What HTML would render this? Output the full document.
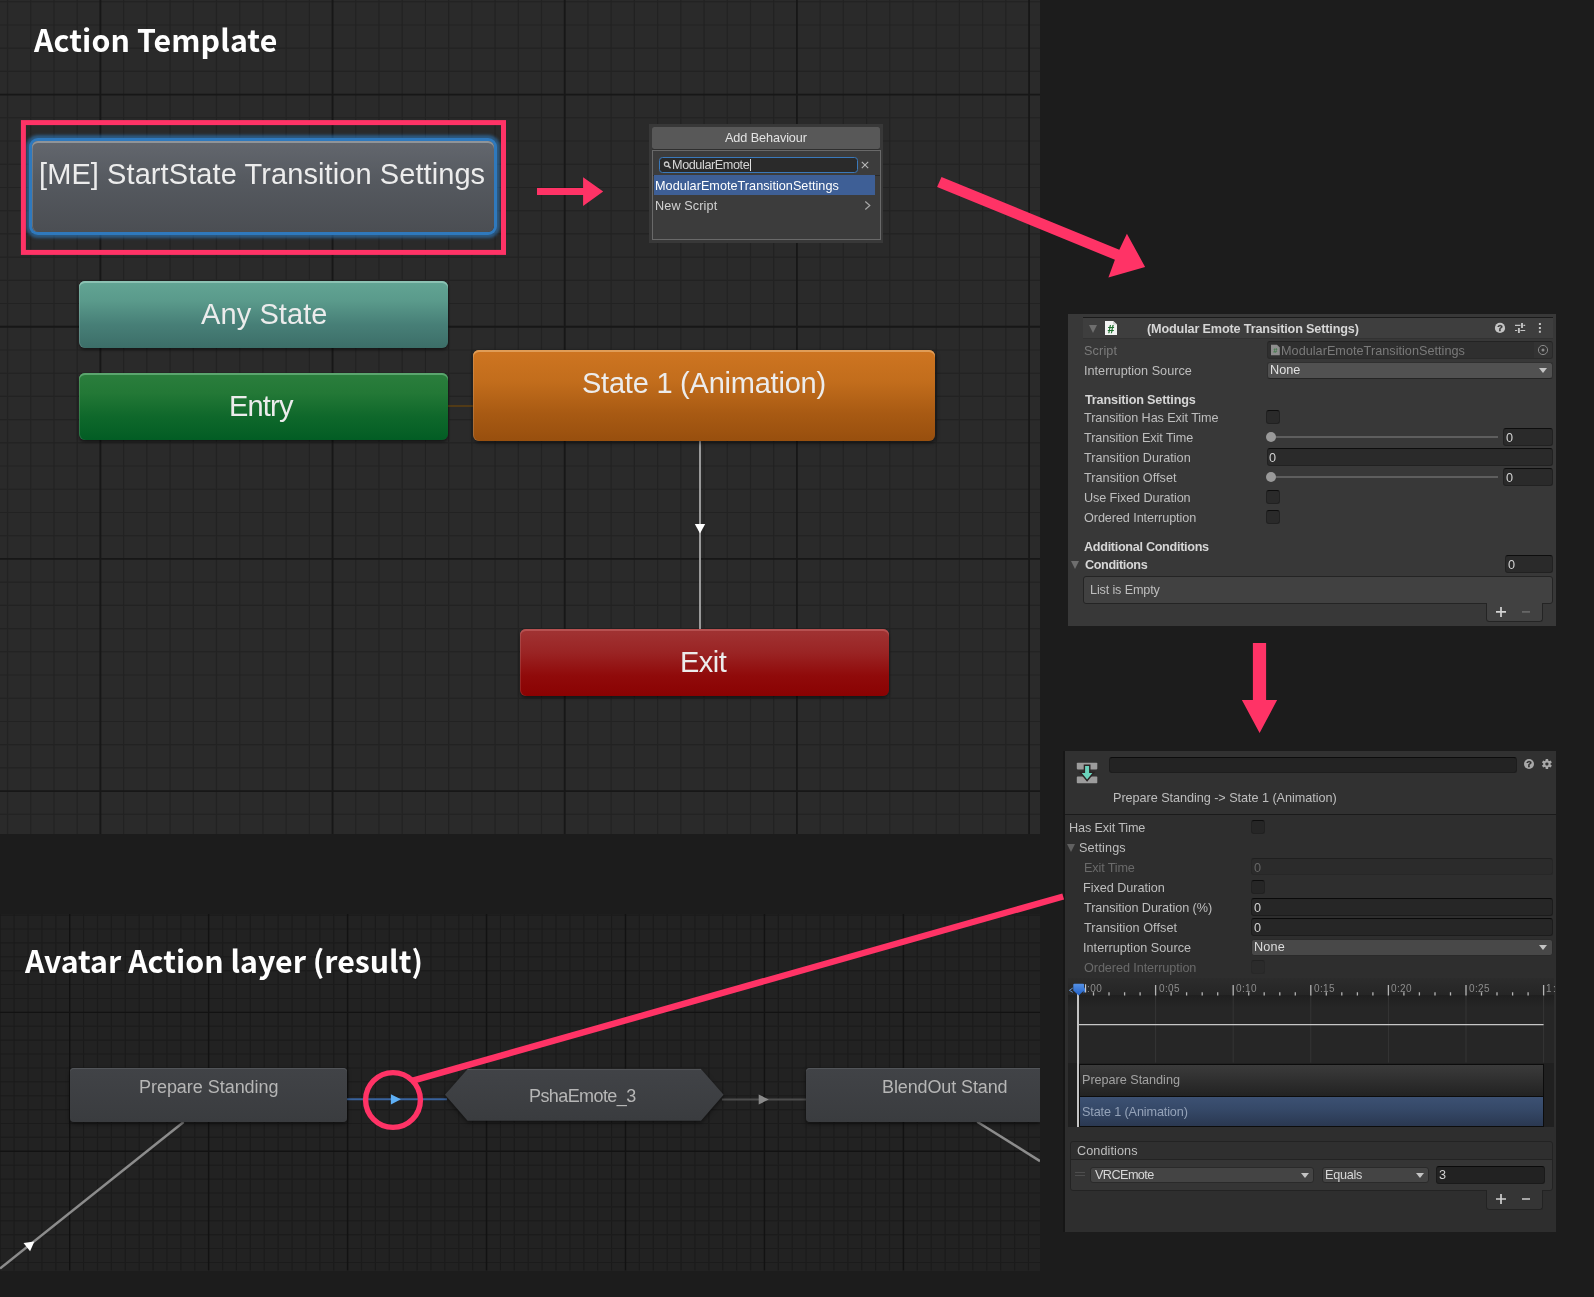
<!DOCTYPE html>
<html lang="en"><head><meta charset="utf-8"><title>Action Template</title>
<style>
html,body{margin:0;padding:0}
body{width:1594px;height:1297px;background:#1c1c1c;position:relative;overflow:hidden;font-family:"Liberation Sans",sans-serif}
.a{position:absolute}
.t{position:absolute;white-space:nowrap;line-height:1;will-change:transform}
.node{position:absolute;border-radius:6px;box-sizing:border-box}
.fld{position:absolute;box-sizing:border-box;border-radius:3px;background:#2a2a2a;border:1px solid #212121;border-top-color:#0d0d0d}
.dd{position:absolute;box-sizing:border-box;border-radius:3px;background:#515151;border:1px solid #303030;border-bottom-color:#242424}
.cb{position:absolute;box-sizing:border-box;border-radius:3px;background:#2a2a2a;border:1px solid #212121;border-top-color:#0d0d0d;width:14px;height:14px}
.g{will-change:transform}
.tri{position:absolute;width:0;height:0;border-left:4px solid transparent;border-right:4px solid transparent;border-top:5px solid #c4c4c4}
</style></head>
<body>
<div class="a" style="left:0;top:0;width:1040.4px;height:834px;background:#2a2a2a;overflow:hidden">
<svg class="a" style="left:0;top:0" width="1040.4" height="834" viewBox="0 0 1040.4 834"><path d="M7.53 0V834M30.75 0V834M53.96 0V834M77.18 0V834M123.61 0V834M146.83 0V834M170.05 0V834M193.27 0V834M216.48 0V834M239.70 0V834M262.92 0V834M286.13 0V834M309.35 0V834M355.78 0V834M379.00 0V834M402.22 0V834M425.44 0V834M448.65 0V834M471.87 0V834M495.09 0V834M518.30 0V834M541.52 0V834M587.95 0V834M611.17 0V834M634.39 0V834M657.61 0V834M680.82 0V834M704.04 0V834M727.26 0V834M750.47 0V834M773.69 0V834M820.12 0V834M843.34 0V834M866.56 0V834M889.78 0V834M912.99 0V834M936.21 0V834M959.43 0V834M982.64 0V834M1005.86 0V834M0 1.73H1040.4M0 24.95H1040.4M0 48.16H1040.4M0 71.38H1040.4M0 117.81H1040.4M0 141.03H1040.4M0 164.25H1040.4M0 187.47H1040.4M0 210.68H1040.4M0 233.90H1040.4M0 257.12H1040.4M0 280.33H1040.4M0 303.55H1040.4M0 349.98H1040.4M0 373.20H1040.4M0 396.42H1040.4M0 419.64H1040.4M0 442.85H1040.4M0 466.07H1040.4M0 489.29H1040.4M0 512.50H1040.4M0 535.72H1040.4M0 582.15H1040.4M0 605.37H1040.4M0 628.59H1040.4M0 651.81H1040.4M0 675.02H1040.4M0 698.24H1040.4M0 721.46H1040.4M0 744.67H1040.4M0 767.89H1040.4M0 814.32H1040.4" stroke="#222222" stroke-width="1.1" fill="none"/><path d="M100.40 0V834M332.57 0V834M564.74 0V834M796.91 0V834M1029.08 0V834M0 94.60H1040.4M0 326.77H1040.4M0 558.94H1040.4M0 791.11H1040.4" stroke="#171717" stroke-width="1.8" fill="none"/></svg>
</div>
<div class="a" style="left:0;top:914.2px;width:1040px;height:356.6px;background:#222222;overflow:hidden">
<svg class="a" style="left:0;top:0" width="1040" height="356.6" viewBox="0 0 1040 356.6"><path d="M0.23 0V356.6M14.12 0V356.6M28.02 0V356.6M41.91 0V356.6M55.80 0V356.6M83.59 0V356.6M97.49 0V356.6M111.38 0V356.6M125.28 0V356.6M139.17 0V356.6M153.07 0V356.6M166.97 0V356.6M180.86 0V356.6M194.76 0V356.6M222.55 0V356.6M236.44 0V356.6M250.34 0V356.6M264.23 0V356.6M278.13 0V356.6M292.02 0V356.6M305.92 0V356.6M319.81 0V356.6M333.70 0V356.6M361.49 0V356.6M375.39 0V356.6M389.28 0V356.6M403.18 0V356.6M417.07 0V356.6M430.97 0V356.6M444.86 0V356.6M458.76 0V356.6M472.65 0V356.6M500.44 0V356.6M514.34 0V356.6M528.23 0V356.6M542.13 0V356.6M556.02 0V356.6M569.92 0V356.6M583.81 0V356.6M597.71 0V356.6M611.60 0V356.6M639.39 0V356.6M653.29 0V356.6M667.18 0V356.6M681.08 0V356.6M694.97 0V356.6M708.87 0V356.6M722.76 0V356.6M736.66 0V356.6M750.55 0V356.6M778.34 0V356.6M792.24 0V356.6M806.13 0V356.6M820.03 0V356.6M833.92 0V356.6M847.82 0V356.6M861.71 0V356.6M875.61 0V356.6M889.50 0V356.6M917.29 0V356.6M931.19 0V356.6M945.08 0V356.6M958.98 0V356.6M972.87 0V356.6M986.77 0V356.6M1000.66 0V356.6M1014.56 0V356.6M1028.45 0V356.6M0 1.08H1040M0 14.98H1040M0 28.88H1040M0 42.77H1040M0 56.66H1040M0 70.56H1040M0 84.45H1040M0 112.24H1040M0 126.14H1040M0 140.03H1040M0 153.93H1040M0 167.82H1040M0 181.72H1040M0 195.62H1040M0 209.51H1040M0 223.41H1040M0 251.20H1040M0 265.09H1040M0 278.99H1040M0 292.88H1040M0 306.77H1040M0 320.67H1040M0 334.56H1040M0 348.46H1040" stroke="#1b1b1b" stroke-width="1.1" fill="none"/><path d="M69.70 0V356.6M208.65 0V356.6M347.60 0V356.6M486.55 0V356.6M625.50 0V356.6M764.45 0V356.6M903.40 0V356.6M0 98.35H1040M0 237.30H1040" stroke="#121212" stroke-width="1.4" fill="none"/></svg>
</div>
<svg class="a" style="left:0;top:0" width="1594" height="1297" viewBox="0 0 1594 1297">
<path d="M448 406H473" stroke="#5c3f12" stroke-width="1.6"/>
<path d="M700 441V629" stroke="#a0a0a0" stroke-width="1.9"/>
<path d="M694.8 524H705.2L700 533.6Z" fill="#ffffff"/>
<path d="M183.6 1122L0 1268.6" stroke="#8c8c8c" stroke-width="2.5"/>
<path d="M23.5 1243.1L34.3 1241.4L30.1 1251.3Z" fill="#ffffff"/>
<path d="M346.8 1099.3H447" stroke="#38629c" stroke-width="2"/>
<path d="M390.9 1094.2L400.9 1099.3L390.9 1104.4Z" fill="#5eb0f6"/>
<path d="M722 1099.5H806" stroke="#4c4c4c" stroke-width="2"/>
<path d="M758.7 1094.5L768.8 1099.5L758.7 1104.5Z" fill="#8a8a8a"/>
<path d="M977.2 1121.8L1040 1161.1" stroke="#8c8c8c" stroke-width="2.5"/>
</svg>
<div class="node" style="left:32px;top:141px;width:461.6px;height:90.5px;background:linear-gradient(#63676e,#55595f 45%,#4b4e53);box-shadow:0 0 0 3px #2f79bd,0 0 3px 6px rgba(47,121,189,.6),inset 0 2px 0 #8f9499,inset 1px 0 0 rgba(255,255,255,.16)"></div>
<span class="t" style="left:38.89px;top:158px;font-size:29px;line-height:32px;color:#ececec;letter-spacing:0.084px">[ME] StartState Transition Settings</span>
<div class="node" style="left:79px;top:281px;width:369px;height:67px;background:linear-gradient(#62a594,#5a9a8b 30%,#477f77 65%,#3c6e68);box-shadow:0 2px 3px rgba(0,0,0,.45),inset 0 2px 0 #8cc2b3,inset 1px 0 0 rgba(255,255,255,.14)"></div>
<span class="t" style="left:201.00px;top:298px;font-size:29px;line-height:32px;color:#ececec;letter-spacing:0.092px">Any State</span>
<div class="node" style="left:79px;top:373px;width:369px;height:67px;background:linear-gradient(#2b7e3d,#237836 30%,#0f682b 65%,#025d24);box-shadow:0 2px 3px rgba(0,0,0,.45),inset 0 2px 0 #5ba56e,inset 1px 0 0 rgba(255,255,255,.14)"></div>
<span class="t" style="left:229.33px;top:390px;font-size:29px;line-height:32px;color:#ececec;letter-spacing:-0.805px">Entry</span>
<div class="node" style="left:473px;top:350px;width:462px;height:91px;background:linear-gradient(#ce7521,#c26d1c 35%,#a85a13 70%,#984f0e);box-shadow:1px 2px 4px rgba(0,0,0,.5),inset 0 2px 0 #e09d57,inset 1px 0 0 rgba(255,255,255,.14)"></div>
<span class="t" style="left:582.09px;top:367px;font-size:29px;line-height:32px;color:#ececec;letter-spacing:-0.229px">State 1 (Animation)</span>
<div class="node" style="left:520.3px;top:629px;width:368.7px;height:67px;background:linear-gradient(#a13434,#9a2424 35%,#900a0a 70%,#8a0202);box-shadow:0 2px 3px rgba(0,0,0,.45),inset 0 2px 0 #b65050,inset 1px 0 0 rgba(255,255,255,.12)"></div>
<span class="t" style="left:680.03px;top:646px;font-size:29px;line-height:32px;color:#ececec;letter-spacing:-0.492px">Exit</span>
<span class="t" style="left:33.57px;top:17px;font-size:30.3px;line-height:44px;color:#ffffff;letter-spacing:0.113px;font-weight:700;font-family:'Noto Sans CJK JP','Liberation Sans',sans-serif">Action Template</span>
<span class="t" style="left:24.57px;top:938px;font-size:30.3px;line-height:44px;color:#ffffff;letter-spacing:0.011px;font-weight:700;font-family:'Noto Sans CJK JP','Liberation Sans',sans-serif">Avatar Action layer (result)</span>
<div class="node" style="left:70.1px;top:1068.2px;width:276.7px;height:53.7px;border-radius:4px;background:linear-gradient(#414347,#3a3c3f);box-shadow:0 2px 4px rgba(0,0,0,.5),inset 0 1px 0 #53565a"></div>
<span class="t" style="left:139.30px;top:1077px;font-size:18px;line-height:20px;color:#b6b6b6;letter-spacing:-0.039px">Prepare Standing</span>
<svg class="a" style="left:440px;top:1062px;filter:drop-shadow(0 2px 2px rgba(0,0,0,.5))" width="290" height="66" viewBox="440 1062 290 66"><defs><linearGradient id="hx" x1="0" y1="0" x2="0" y2="1"><stop offset="0" stop-color="#414347"/><stop offset="1" stop-color="#3a3c3f"/></linearGradient></defs><path d="M445 1094.8L467.6 1068.9H701L723.6 1094.8L701 1120.8H467.6Z" fill="url(#hx)"/><path d="M467.6 1069.4H701" stroke="#53565a" stroke-width="1"/></svg>
<span class="t" style="left:528.50px;top:1086px;font-size:18px;line-height:20px;color:#b6b6b6;letter-spacing:-0.586px">PshaEmote_3</span>
<div class="node" style="left:806px;top:1068.4px;width:234px;height:53.3px;border-radius:4px 0 0 4px;background:linear-gradient(#414347,#3a3c3f);box-shadow:0 2px 4px rgba(0,0,0,.5),inset 0 1px 0 #53565a"></div>
<span class="t" style="left:882.30px;top:1077px;font-size:18px;line-height:20px;color:#b6b6b6;letter-spacing:-0.114px">BlendOut Stand</span>
<div class="a" style="left:1040px;top:914.2px;width:24px;height:356.6px;background:#1c1c1c"></div>
<div class="a" style="left:649.3px;top:124.3px;width:233.7px;height:118.7px;background:#383838"></div>
<div class="a" style="left:652px;top:127px;width:228px;height:22px;background:#585858;border-radius:2.5px;box-shadow:0 1px 0 #2e2e2e"></div>
<div class="a" style="left:651.5px;top:150px;width:229px;height:89.5px;background:#3c3c3c;border:1px solid #696969;box-sizing:border-box"></div>
<span class="t" style="left:725.30px;top:131px;font-size:12.66px;line-height:14px;color:#e4e4e4;letter-spacing:-0.086px">Add Behaviour</span>
<div class="a" style="left:659.2px;top:157px;width:198.6px;height:15.6px;box-sizing:border-box;background:#2a2a2a;border:1px solid #3a79bb;border-radius:3.5px"></div>
<svg class="a" style="left:662px;top:159px" width="11" height="12" viewBox="0 0 11 12"><circle cx="4.6" cy="5.2" r="2.2" fill="none" stroke="#c8c8c8" stroke-width="1.3"/><path d="M6.3 6.9L8.6 9.2" stroke="#c8c8c8" stroke-width="1.5"/></svg>
<span class="t" style="left:672.40px;top:158px;font-size:12.66px;line-height:14px;color:#d6d6d6;letter-spacing:-0.417px">ModularEmote</span>
<div class="a" style="left:750.2px;top:158.6px;width:1px;height:12.4px;background:#e0e0e0"></div>
<svg class="a" style="left:860px;top:160px" width="10" height="10" viewBox="0 0 10 10"><path d="M1.8 1.8L8.2 8.2M8.2 1.8L1.8 8.2" stroke="#b8b8b8" stroke-width="1.1"/></svg>
<div class="a" style="left:652.5px;top:175px;width:227px;height:1px;background:#2a2a2a"></div>
<div class="a" style="left:653.9px;top:174.7px;width:221.3px;height:20.4px;background:#3e5f96"></div>
<span class="t" style="left:654.50px;top:179px;font-size:12.66px;line-height:14px;color:#ffffff;letter-spacing:0.022px">ModularEmoteTransitionSettings</span>
<span class="t" style="left:654.50px;top:199px;font-size:12.66px;line-height:14px;color:#d2d2d2;letter-spacing:0.113px">New Script</span>
<svg class="a" style="left:863px;top:200px" width="9" height="11" viewBox="0 0 9 11"><path d="M2.3 1.5L6.8 5.5L2.3 9.5" fill="none" stroke="#a8a8a8" stroke-width="1.2"/></svg>
<div class="a" style="left:1068px;top:313.8px;width:488px;height:312.2px;background:#383838"></div>
<div class="a" style="left:1083px;top:316.8px;width:470px;height:22px;box-sizing:border-box;background:#3e3e3e;border-top:1.2px solid #1a1a1a;border-bottom:1px solid #323232"></div>
<div class="a" style="left:1088.6px;top:325px;width:0;height:0;border-left:4.8px solid transparent;border-right:4.8px solid transparent;border-top:8.4px solid #6e6e6e"></div>
<svg class="a g" style="left:1104px;top:320px" width="14" height="16" viewBox="0 0 14 16"><path d="M1 0.9H9.2L13 4.6V15.1H1Z" fill="#f4f4f4"/><path d="M9.2 0.9V4.6H13Z" fill="#cfcfcf"/><text x="7" y="12.6" text-anchor="middle" font-family="Liberation Sans,sans-serif" font-weight="700" font-size="11.5" fill="#1f6f2e" stroke="#1f6f2e" stroke-width="0.25">#</text></svg>
<span class="t" style="left:1146.50px;top:322px;font-size:12.66px;line-height:14px;color:#d6d6d6;letter-spacing:-0.156px;font-weight:700">(Modular Emote Transition Settings)</span>
<svg class="a g" style="left:1493px;top:321px" width="56" height="14" viewBox="1493 321 56 14"><circle cx="1500" cy="327.9" r="5.1" fill="#c4c4c4"/><text x="1500" y="331.2" text-anchor="middle" font-family="Liberation Sans,sans-serif" font-weight="700" font-size="9.2" fill="#383838" stroke="#383838" stroke-width="0.3">?</text><path d="M1515 325.4H1520.4M1523.4 325.4H1525.2M1515 330.5H1517.2M1520.4 330.5H1525.2" stroke="#c4c4c4" stroke-width="1.2"/><path d="M1522 322.9V327.9M1518.9 328.1V333.1" stroke="#c4c4c4" stroke-width="1.9"/><path d="M1538.9 323.1h2v2h-2zM1538.9 326.9h2v2h-2zM1538.9 330.8h2v2h-2z" fill="#c4c4c4"/></svg>
<span class="t" style="left:1084.10px;top:344px;font-size:12.66px;line-height:14px;color:#7a7a7a;letter-spacing:0.132px">Script</span>
<div class="fld" style="left:1266.6px;top:341.2px;width:286.2px;height:17.4px;background:#2f2f2f;border-color:#2a2a2a;border-top-color:#232323"></div>
<div class="a" style="left:1534px;top:342.2px;width:17.8px;height:15.4px;background:#333333;border-radius:0 2px 2px 0"></div>
<svg class="a g" style="left:1269.5px;top:344px" width="11" height="12" viewBox="0 0 11 12"><path d="M1 0.8H7L9.8 3.6V11.2H1Z" fill="#8e8e8e"/><text x="5.4" y="9.4" text-anchor="middle" font-family="Liberation Sans,sans-serif" font-weight="700" font-size="7.5" fill="#3f7a48">#</text></svg>
<span class="t" style="left:1281.40px;top:344px;font-size:12.66px;line-height:14px;color:#7a7a7a;letter-spacing:0.026px">ModularEmoteTransitionSettings</span>
<svg class="a" style="left:1537px;top:344px" width="12" height="12" viewBox="0 0 12 12"><circle cx="6" cy="6" r="4.6" fill="none" stroke="#8a8a8a" stroke-width="1"/><circle cx="6" cy="6" r="1.5" fill="#8a8a8a"/></svg>
<span class="t" style="left:1083.50px;top:364px;font-size:12.66px;line-height:14px;color:#bebebe;letter-spacing:0.010px">Interruption Source</span>
<div class="dd" style="left:1266.6px;top:361.5px;width:286.2px;height:17px"></div>
<span class="t" style="left:1269.50px;top:363px;font-size:12.66px;line-height:14px;color:#e0e0e0;letter-spacing:0.026px">None</span>
<div class="tri" style="left:1538.8px;top:367.6px"></div>
<span class="t" style="left:1084.80px;top:393px;font-size:12.66px;line-height:14px;color:#d6d6d6;letter-spacing:-0.173px;font-weight:700">Transition Settings</span>
<span class="t" style="left:1084.40px;top:411px;font-size:12.66px;line-height:14px;color:#bebebe;letter-spacing:-0.091px">Transition Has Exit Time</span>
<span class="t" style="left:1084.40px;top:431px;font-size:12.66px;line-height:14px;color:#bebebe;letter-spacing:-0.067px">Transition Exit Time</span>
<span class="t" style="left:1084.40px;top:451px;font-size:12.66px;line-height:14px;color:#bebebe;letter-spacing:0.014px">Transition Duration</span>
<span class="t" style="left:1084.40px;top:471px;font-size:12.66px;line-height:14px;color:#bebebe;letter-spacing:0.022px">Transition Offset</span>
<span class="t" style="left:1083.70px;top:491px;font-size:12.66px;line-height:14px;color:#bebebe;letter-spacing:-0.101px">Use Fixed Duration</span>
<span class="t" style="left:1084.00px;top:511px;font-size:12.66px;line-height:14px;color:#bebebe;letter-spacing:-0.092px">Ordered Interruption</span>
<div class="cb" style="left:1266.4px;top:410px"></div>
<div class="cb" style="left:1266.4px;top:490px"></div>
<div class="cb" style="left:1266.4px;top:510px"></div>
<div class="a" style="left:1270px;top:435.9px;width:228px;height:2px;background:#5e5e5e"></div>
<div class="a" style="left:1265.9px;top:431.9px;width:10px;height:10px;border-radius:5px;background:#999999"></div>
<div class="fld" style="left:1503.2px;top:428.0px;width:49.6px;height:17.6px"></div>
<span class="t" style="left:1506.00px;top:431px;font-size:12.66px;line-height:14px;color:#d2d2d2">0</span>
<div class="a" style="left:1270px;top:475.9px;width:228px;height:2px;background:#5e5e5e"></div>
<div class="a" style="left:1265.9px;top:471.9px;width:10px;height:10px;border-radius:5px;background:#999999"></div>
<div class="fld" style="left:1503.2px;top:468.0px;width:49.6px;height:17.6px"></div>
<span class="t" style="left:1506.00px;top:471px;font-size:12.66px;line-height:14px;color:#d2d2d2">0</span>
<div class="fld" style="left:1266.6px;top:448.2px;width:286.2px;height:17.6px"></div>
<span class="t" style="left:1269.10px;top:451px;font-size:12.66px;line-height:14px;color:#d2d2d2">0</span>
<span class="t" style="left:1084.30px;top:540px;font-size:12.66px;line-height:14px;color:#d6d6d6;letter-spacing:-0.318px;font-weight:700">Additional Conditions</span>
<div class="a" style="left:1070.8px;top:561px;width:0;height:0;border-left:4.7px solid transparent;border-right:4.7px solid transparent;border-top:8.2px solid #6e6e6e"></div>
<span class="t" style="left:1084.90px;top:558px;font-size:12.66px;line-height:14px;color:#d6d6d6;letter-spacing:-0.373px;font-weight:700">Conditions</span>
<div class="fld" style="left:1505.2px;top:555.1px;width:47.6px;height:17.7px"></div>
<span class="t" style="left:1508.20px;top:558px;font-size:12.66px;line-height:14px;color:#d2d2d2">0</span>
<div class="a" style="left:1083.4px;top:576.3px;width:469.4px;height:27.6px;box-sizing:border-box;background:#414141;border:1px solid #242424;border-radius:3px"></div>
<span class="t" style="left:1090.30px;top:583px;font-size:12.66px;line-height:14px;color:#bebebe;letter-spacing:-0.152px">List is Empty</span>
<div class="a" style="left:1485.8px;top:602.9px;width:56.8px;height:19.6px;box-sizing:border-box;background:#414141;border:1px solid #242424;border-top:none;border-radius:0 0 3.5px 3.5px"></div>
<svg class="a" style="left:1494px;top:605px" width="40" height="14" viewBox="1494 605 40 14"><path d="M1496 611.9H1506M1501 606.9V616.9" stroke="#d4d4d4" stroke-width="1.7"/><path d="M1522 611.9H1530" stroke="#6e6e6e" stroke-width="1.5"/></svg>
<div class="a" style="left:1063.4px;top:750.8px;width:1.6px;height:481px;background:#161616"></div>
<div class="a" style="left:1065px;top:750.8px;width:491px;height:481px;background:#2e2e2e"></div>
<div class="a" style="left:1065px;top:750.8px;width:491px;height:63px;background:#313131"></div>
<div class="a" style="left:1065px;top:813.7px;width:491px;height:1.2px;background:#1a1a1a"></div>
<svg class="a" style="left:1075px;top:761px" width="24" height="24" viewBox="1075 761 24 24"><rect x="1076.8" y="762.8" width="20.5" height="6.6" rx="0.8" fill="#9c9c9c"/><rect x="1076.8" y="776.6" width="20.5" height="6.7" rx="0.8" fill="#9c9c9c"/><path d="M1085.1 766H1089.1V773.1H1092.4L1087.1 779.6L1081.8 773.1H1085.1Z" fill="#6bd2bc" stroke="#2a2324" stroke-width="2.8" paint-order="stroke" stroke-linejoin="miter"/></svg>
<div class="fld" style="left:1109.2px;top:757px;width:407.5px;height:15.7px;background:#232323;border-color:#1d1d1d;border-top-color:#0c0c0c"></div>
<svg class="a g" style="left:1522px;top:757px" width="32" height="14" viewBox="1522 757 32 14"><circle cx="1529" cy="764" r="5" fill="#a8a8a8"/><text x="1529" y="767.3" text-anchor="middle" font-family="Liberation Sans,sans-serif" font-weight="700" font-size="9.2" fill="#2c2c2c" stroke="#2c2c2c" stroke-width="0.3">?</text><g transform="translate(1546.9 764)"><circle r="2.65" fill="none" stroke="#a8a8a8" stroke-width="2.1"/><rect x="-1.25" y="-5" width="2.5" height="2.4" fill="#a8a8a8" transform="rotate(0)"/><rect x="-1.25" y="-5" width="2.5" height="2.4" fill="#a8a8a8" transform="rotate(60)"/><rect x="-1.25" y="-5" width="2.5" height="2.4" fill="#a8a8a8" transform="rotate(120)"/><rect x="-1.25" y="-5" width="2.5" height="2.4" fill="#a8a8a8" transform="rotate(180)"/><rect x="-1.25" y="-5" width="2.5" height="2.4" fill="#a8a8a8" transform="rotate(240)"/><rect x="-1.25" y="-5" width="2.5" height="2.4" fill="#a8a8a8" transform="rotate(300)"/></g></svg>
<span class="t" style="left:1113.40px;top:791px;font-size:12.66px;line-height:14px;color:#bebebe;letter-spacing:-0.048px">Prepare Standing -&gt; State 1 (Animation)</span>
<span class="t" style="left:1068.50px;top:821px;font-size:12.66px;line-height:14px;color:#bebebe;letter-spacing:-0.139px">Has Exit Time</span>
<div class="cb" style="left:1251px;top:820px;background:#262626"></div>
<div class="a" style="left:1066.8px;top:843.8px;width:0;height:0;border-left:4.7px solid transparent;border-right:4.7px solid transparent;border-top:8.2px solid #606060"></div>
<span class="t" style="left:1078.90px;top:841px;font-size:12.66px;line-height:14px;color:#bebebe;letter-spacing:0.127px">Settings</span>
<span class="t" style="left:1083.80px;top:861px;font-size:12.66px;line-height:14px;color:#6a6a6a;letter-spacing:-0.143px">Exit Time</span>
<div class="fld" style="left:1251.1px;top:858.1px;width:301.7px;height:17.4px;background:#2b2b2b;border-color:#272727;border-top-color:#1f1f1f"></div>
<span class="t" style="left:1254.10px;top:861px;font-size:12.66px;line-height:14px;color:#666666">0</span>
<span class="t" style="left:1083.30px;top:881px;font-size:12.66px;line-height:14px;color:#bebebe;letter-spacing:-0.037px">Fixed Duration</span>
<div class="cb" style="left:1251px;top:880px;background:#262626"></div>
<span class="t" style="left:1084.10px;top:901px;font-size:12.66px;line-height:14px;color:#bebebe;letter-spacing:-0.071px">Transition Duration (%)</span>
<div class="fld" style="left:1251.1px;top:898.2px;width:301.7px;height:17.6px;background:#262626;border-color:#1c1c1c;border-top-color:#0a0a0a"></div>
<span class="t" style="left:1254.10px;top:901px;font-size:12.66px;line-height:14px;color:#d2d2d2">0</span>
<span class="t" style="left:1084.10px;top:921px;font-size:12.66px;line-height:14px;color:#bebebe;letter-spacing:0.053px">Transition Offset</span>
<div class="fld" style="left:1251.1px;top:918.2px;width:301.7px;height:17.6px;background:#262626;border-color:#1c1c1c;border-top-color:#0a0a0a"></div>
<span class="t" style="left:1254.10px;top:921px;font-size:12.66px;line-height:14px;color:#d2d2d2">0</span>
<span class="t" style="left:1083.20px;top:941px;font-size:12.66px;line-height:14px;color:#bebebe;letter-spacing:0.021px">Interruption Source</span>
<div class="dd" style="left:1251.1px;top:939px;width:301.7px;height:16.8px;background:#484848;border-color:#2a2a2a"></div>
<span class="t" style="left:1254.40px;top:940px;font-size:12.66px;line-height:14px;color:#dcdcdc;letter-spacing:0.192px">None</span>
<div class="tri" style="left:1539.4px;top:945px"></div>
<span class="t" style="left:1083.70px;top:961px;font-size:12.66px;line-height:14px;color:#6a6a6a;letter-spacing:-0.082px">Ordered Interruption</span>
<div class="cb" style="left:1251px;top:960px;background:#2b2b2b;border-color:#282828;border-top-color:#222"></div>
<div class="a" style="left:1068.2px;top:978px;width:485.8px;height:17.5px;background:linear-gradient(#2c2c2c,#252525)"></div>
<div class="a" style="left:1068.2px;top:995.4px;width:485.8px;height:68px;background:linear-gradient(#1f1f1f,#262626 12px,#262626)"></div>
<div class="a" style="left:1068.2px;top:1062.6px;width:485.8px;height:64.6px;background:#202020"></div>
<svg class="a" style="left:1060px;top:976px" width="500" height="156" viewBox="1060 976 500 156"><path d="M1155.6 995.4V1062.6M1233.2 995.4V1062.6M1310.8 995.4V1062.6M1388.4 995.4V1062.6M1466.0 995.4V1062.6M1543.6 995.4V1062.6" stroke="#353535" stroke-width="1"/><path d="M1078.0 985V995.4M1093.5 992.2V995.4M1109.0 992.2V995.4M1124.6 992.2V995.4M1140.1 992.2V995.4M1155.6 985V995.4M1171.1 992.2V995.4M1186.6 992.2V995.4M1202.2 992.2V995.4M1217.7 992.2V995.4M1233.2 985V995.4M1248.7 992.2V995.4M1264.2 992.2V995.4M1279.8 992.2V995.4M1295.3 992.2V995.4M1310.8 985V995.4M1326.3 992.2V995.4M1341.8 992.2V995.4M1357.4 992.2V995.4M1372.9 992.2V995.4M1388.4 985V995.4M1403.9 992.2V995.4M1419.4 992.2V995.4M1435.0 992.2V995.4M1450.5 992.2V995.4M1466.0 985V995.4M1481.5 992.2V995.4M1497.0 992.2V995.4M1512.6 992.2V995.4M1528.1 992.2V995.4M1543.6 985V995.4" stroke="#b4b4b4" stroke-width="1.3"/><path d="M1078 1024.7H1543.6" stroke="#c6c6c6" stroke-width="1.2"/></svg>
<span class="t" style="left:1087.20px;top:983px;font-size:10px;line-height:11px;color:#8c8c8c;letter-spacing:0.480px">:00</span>
<span class="t" style="left:1158.50px;top:983px;font-size:10px;line-height:11px;color:#8c8c8c;letter-spacing:0.333px">0:05</span>
<span class="t" style="left:1236.10px;top:983px;font-size:10px;line-height:11px;color:#8c8c8c;letter-spacing:0.333px">0:10</span>
<span class="t" style="left:1313.70px;top:983px;font-size:10px;line-height:11px;color:#8c8c8c;letter-spacing:0.333px">0:15</span>
<span class="t" style="left:1391.30px;top:983px;font-size:10px;line-height:11px;color:#8c8c8c;letter-spacing:0.333px">0:20</span>
<span class="t" style="left:1468.90px;top:983px;font-size:10px;line-height:11px;color:#8c8c8c;letter-spacing:0.333px">0:25</span>
<span class="t" style="left:1546.10px;top:983px;font-size:10px;line-height:11px;color:#8c8c8c;letter-spacing:1.438px">1:</span>
<div class="a" style="left:1078.6px;top:1063.6px;width:465.2px;height:32px;box-sizing:border-box;background:linear-gradient(#3b3b3b,#303030 45%,#222222);border:1px solid #0c0c0c;border-bottom:none"></div>
<div class="a" style="left:1078.6px;top:1095.6px;width:465.2px;height:31.6px;box-sizing:border-box;background:linear-gradient(#3c5173,#354867 45%,#2a3851);border:1px solid #0c0c0c"></div>
<span class="t" style="left:1081.60px;top:1073px;font-size:12.66px;line-height:14px;color:#a2a2a2;letter-spacing:-0.039px">Prepare Standing</span>
<span class="t" style="left:1082.10px;top:1105px;font-size:12.66px;line-height:14px;color:#94a2b8;letter-spacing:-0.136px">State 1 (Animation)</span>
<div class="a" style="left:1077.1px;top:994px;width:1.9px;height:133.2px;background:#c4c4c4"></div>
<svg class="a" style="left:1066px;top:982px" width="22" height="15" viewBox="1066 982 22 15"><defs><linearGradient id="mk" x1="0" y1="0" x2="0" y2="1"><stop offset="0" stop-color="#5591e6"/><stop offset="1" stop-color="#1f5fc6"/></linearGradient></defs><path d="M1072.8 988L1069.4 990.3L1072.8 992.4" fill="none" stroke="#6b9de0" stroke-width="0.9"/><path d="M1083.6 986.2L1085.9 990.4L1083.6 993.4Z" fill="#3f7fe0"/><path d="M1073.3 984.8Q1073.3 983.8 1074.3 983.8H1083.1Q1084.1 983.8 1084.1 984.8V990.4L1078.7 995.6L1073.3 990.4Z" fill="url(#mk)"/><path d="M1085.6 984.2V992.6" stroke="#d0d0d0" stroke-width="1.1"/></svg>
<div class="a" style="left:1069.5px;top:1140.6px;width:483.3px;height:19.6px;box-sizing:border-box;background:#2f2f2f;border:1px solid #232323;border-radius:3px 3px 0 0"></div>
<span class="t" style="left:1076.90px;top:1144px;font-size:12.66px;line-height:14px;color:#bebebe;letter-spacing:0.079px">Conditions</span>
<div class="a" style="left:1069.5px;top:1159.2px;width:483.3px;height:31.6px;box-sizing:border-box;background:#353535;border:1px solid #232323;border-radius:0 0 3px 3px"></div>
<div class="a" style="left:1075px;top:1172px;width:10px;height:1px;background:#4e4e4e"></div><div class="a" style="left:1075px;top:1175.2px;width:10px;height:1px;background:#4e4e4e"></div>
<div class="dd" style="left:1090.4px;top:1166.7px;width:224px;height:16.6px;background:#444444;border-color:#2a2a2a"></div>
<span class="t" style="left:1094.60px;top:1168px;font-size:12.66px;line-height:14px;color:#d8d8d8;letter-spacing:-0.568px">VRCEmote</span>
<div class="tri" style="left:1301px;top:1172.8px"></div>
<div class="dd" style="left:1321.9px;top:1166.7px;width:107.6px;height:16.6px;background:#444444;border-color:#2a2a2a"></div>
<span class="t" style="left:1324.70px;top:1168px;font-size:12.66px;line-height:14px;color:#d8d8d8;letter-spacing:-0.276px">Equals</span>
<div class="tri" style="left:1416px;top:1172.8px"></div>
<div class="fld" style="left:1436.3px;top:1166.4px;width:108.5px;height:17.6px;background:#222222;border-color:#1a1a1a;border-top-color:#0a0a0a"></div>
<span class="t" style="left:1439.30px;top:1168px;font-size:12.66px;line-height:14px;color:#d2d2d2">3</span>
<div class="a" style="left:1485.8px;top:1189.8px;width:56.8px;height:20px;box-sizing:border-box;background:#353535;border:1px solid #232323;border-top:none;border-radius:0 0 3.5px 3.5px"></div>
<svg class="a" style="left:1494px;top:1192px" width="40" height="14" viewBox="1494 1192 40 14"><path d="M1496 1199H1506M1501 1194V1204" stroke="#d0d0d0" stroke-width="1.7"/><path d="M1522 1199H1530" stroke="#c4c4c4" stroke-width="1.6"/></svg>
<svg class="a" style="left:0;top:0" width="1594" height="1297" viewBox="0 0 1594 1297">
<rect x="23.4" y="122.6" width="480.1" height="129.8" fill="none" stroke="#ff3366" stroke-width="5"/>
<path d="M537 188H583.1V177.2L603.2 191.5L583.1 206V195.1H537Z" fill="#ff3366"/>
<path d="M941.5 177.1L1119.3 249.7L1126.9 233.7L1145.1 266.9L1108.4 277.5L1114.9 259.8L937.1 186.9Z" fill="#ff3366"/>
<path d="M1252.9 642.9H1266.1V700.1H1277.1L1259.6 733.1L1241.9 700.1H1252.9Z" fill="#ff3366"/>
<circle cx="393" cy="1100" r="27.4" fill="none" stroke="#ff3366" stroke-width="5.4"/>
<path d="M412 1080.8L1063.2 896.5" stroke="#ff3366" stroke-width="6.4"/>
</svg>
</body></html>
